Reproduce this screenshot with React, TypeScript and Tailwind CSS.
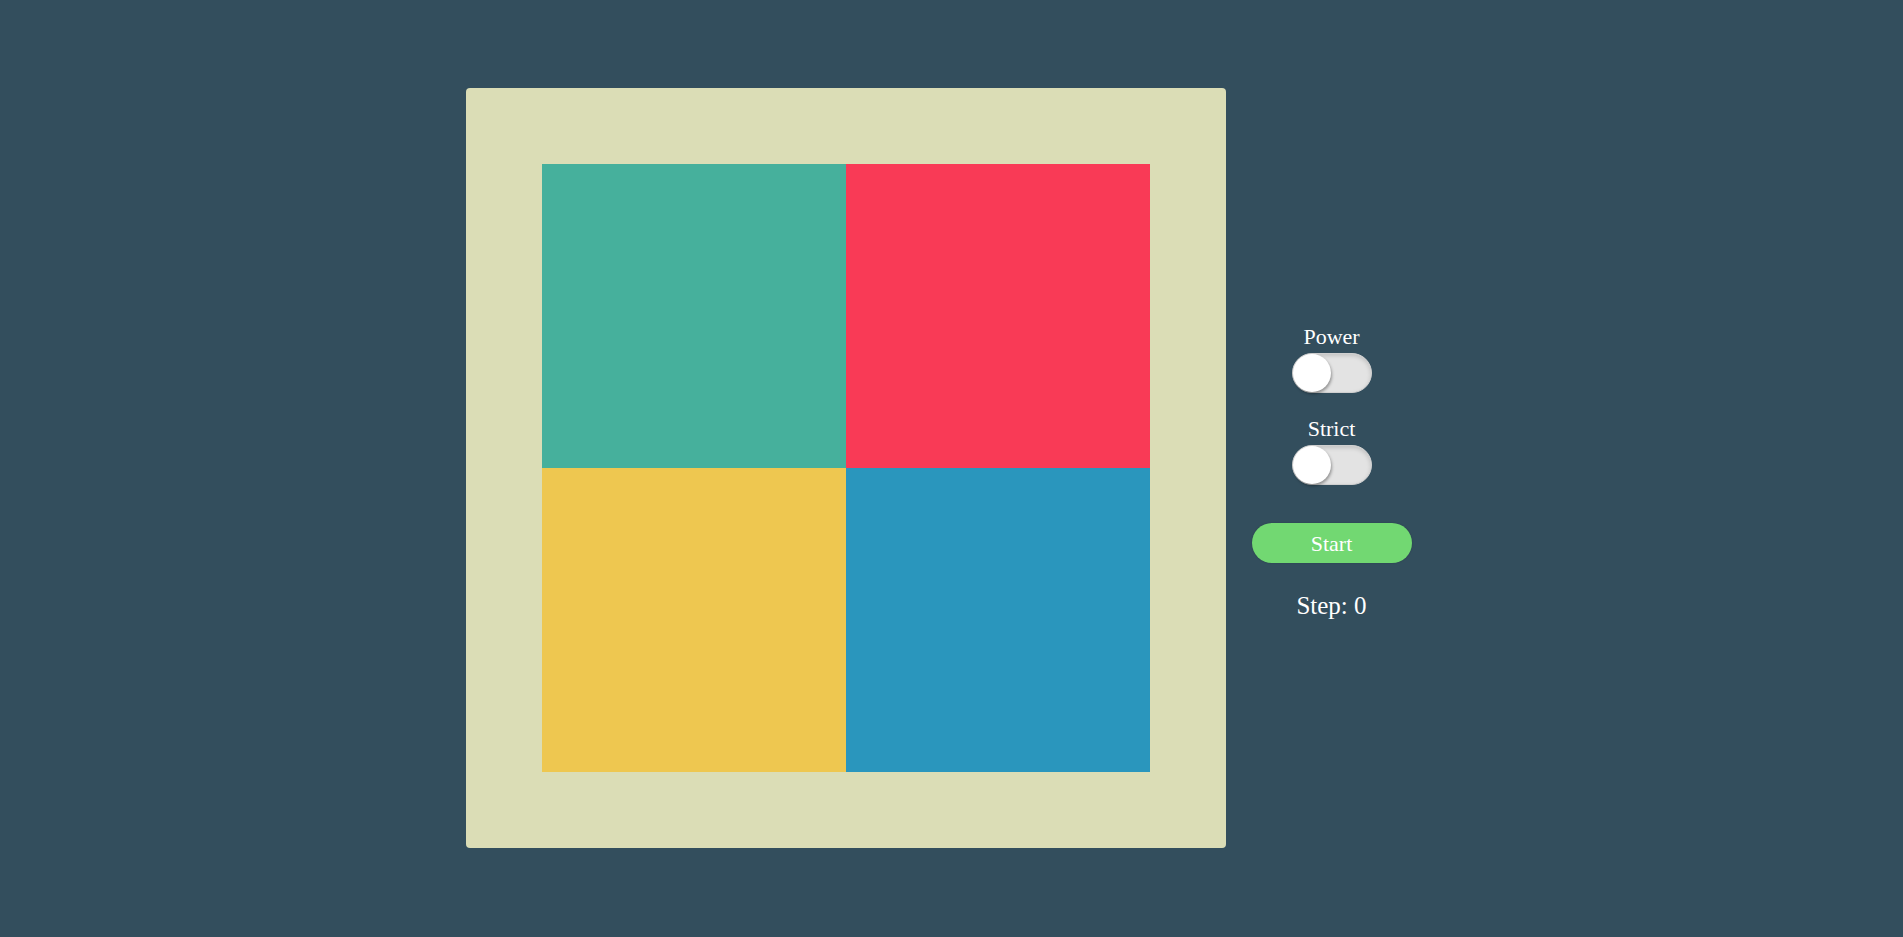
import React from "react";

function Toggle() {
  return (
    <div className="relative w-[80px] h-[40px] rounded-full bg-[#e3e3e3] border border-[#cfcfcf] shadow-[inset_0_2px_4px_rgba(0,0,0,0.15)]">
      <div className="absolute left-[0px] top-[0px] w-[38px] h-[38px] rounded-full bg-white shadow-[1px_2px_3px_rgba(0,0,0,0.35)]" />
    </div>
  );
}

export default function App() {
  return (
    <div
      className="w-full h-screen bg-[#334e5d] flex items-start justify-center pt-[88px]"
      style={{ fontFamily: '"Liberation Serif", "DejaVu Serif", serif' }}
    >
      <div className="w-[760px] h-[760px] bg-[#dbddb6] rounded-[4px] p-[76px]">
        <div className="grid grid-cols-2 grid-rows-2 w-[608px] h-[608px]">
          <div className="bg-[#46b09c]" />
          <div className="bg-[#f93a56]" />
          <div className="bg-[#eec750]" />
          <div className="bg-[#2a96bd]" />
        </div>
      </div>
      <div className="w-[211px] h-[760px] flex flex-col items-center pt-[236px] text-white">
        <div className="text-[22px] leading-[25px]">Power</div>
        <div className="mt-[4px]">
          <Toggle />
        </div>
        <div className="mt-[23px] text-[22px] leading-[25px]">Strict</div>
        <div className="mt-[4px]">
          <Toggle />
        </div>
        <button className="mt-[38px] w-[160px] h-[40px] rounded-full bg-[#72d872] text-white text-[22px] leading-[25px] shadow-[0_0_2px_rgba(0,0,0,0.2)]">
          Start
        </button>
        <div className="mt-[28px] text-[25px] leading-[29px]">Step: 0</div>
      </div>
    </div>
  );
}
